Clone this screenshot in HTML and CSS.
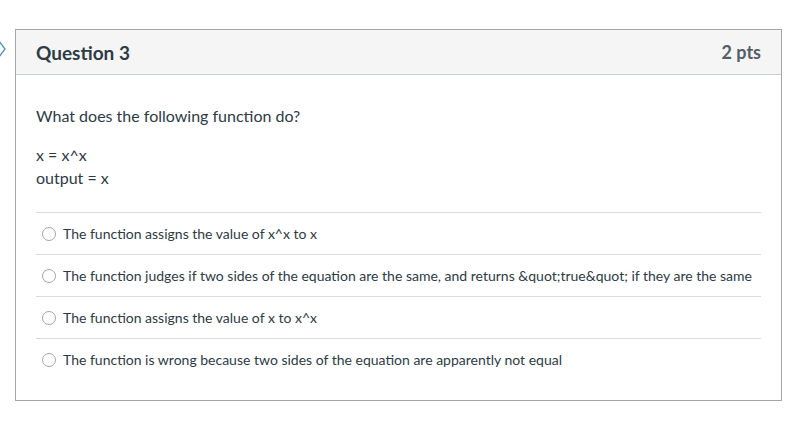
FILE: index.html
```html
<!DOCTYPE html>
<html>
<head>
<meta charset="utf-8">
<link rel="stylesheet" href="styles.css">
</head>
<body>
<div class="page">
  <svg class="nav-arrow" width="10" height="18" viewBox="0 0 10 18"><path d="M1 1 L7 9 L1 17" fill="none" stroke="#4a90c8" stroke-width="1.3"/></svg>
  <div class="card">
    <div class="card-header">
      <h2 class="q-title">Question 3</h2>
      <span class="q-pts">2 pts</span>
    </div>
    <div class="card-body">
      <p class="q-text">What does the following function do?</p>
      <p class="q-code">x = x^x<br>output = x</p>
      <div class="answers">
        <label class="answer"><span class="radio"></span><span>The function assigns the value of x^x to x</span></label>
        <label class="answer"><span class="radio"></span><span>The function judges if two sides of the equation are the same, and returns &amp;quot;true&amp;quot; if they are the same</span></label>
        <label class="answer"><span class="radio"></span><span>The function assigns the value of x to x^x</span></label>
        <label class="answer"><span class="radio"></span><span>The function is wrong because two sides of the equation are apparently not equal</span></label>
      </div>
    </div>
  </div>
</div>
</body>
</html>
```
FILE: styles.css
```css
html, body {
  margin: 0;
  padding: 0;
  background: #ffffff;
}
body {
  font-family: Lato, "Open Sans", sans-serif;
  color: #2d3b45;
  width: 797px;
  height: 423px;
  overflow: hidden;
}
.page {
  position: relative;
  padding: 29px 0 0 15px;
}
.nav-arrow {
  position: absolute;
  left: -2px;
  top: 40px;
}
.card {
  width: 765px;
  border: 1px solid #a6a6a6;
  height: 370px;
  box-sizing: content-box;
}
.card-header {
  height: 44px;
  background: #f5f5f5;
  border-bottom: 1px solid #c7cdd1;
  display: flex;
  align-items: center;
  justify-content: space-between;
  padding: 0 20px;
}
.q-title {
  margin: 0;
  font-size: 19px;
  font-weight: 700;
}
.q-pts {
  font-size: 18px;
  font-weight: 700;
  color: #555e66;
}
.card-body {
  padding: 0 20px;
}
.q-text {
  margin: 31px 0 0;
  font-size: 16px;
  line-height: 20px;
}
.q-code {
  margin: 17px 0 0;
  font-size: 16px;
  line-height: 23px;
}
.answers {
  margin-top: 23px;
}
.answer {
  display: flex;
  align-items: center;
  height: 41px;
  border-top: 1px solid #dadddf;
  font-size: 14px;
  line-height: 18px;
  padding-left: 6px;
  gap: 7px;
}
.radio {
  width: 14px;
  height: 14px;
  border: 1px solid #a0a6ab;
  border-radius: 50%;
  box-sizing: border-box;
  flex: none;
  background: #fff;
}
```
